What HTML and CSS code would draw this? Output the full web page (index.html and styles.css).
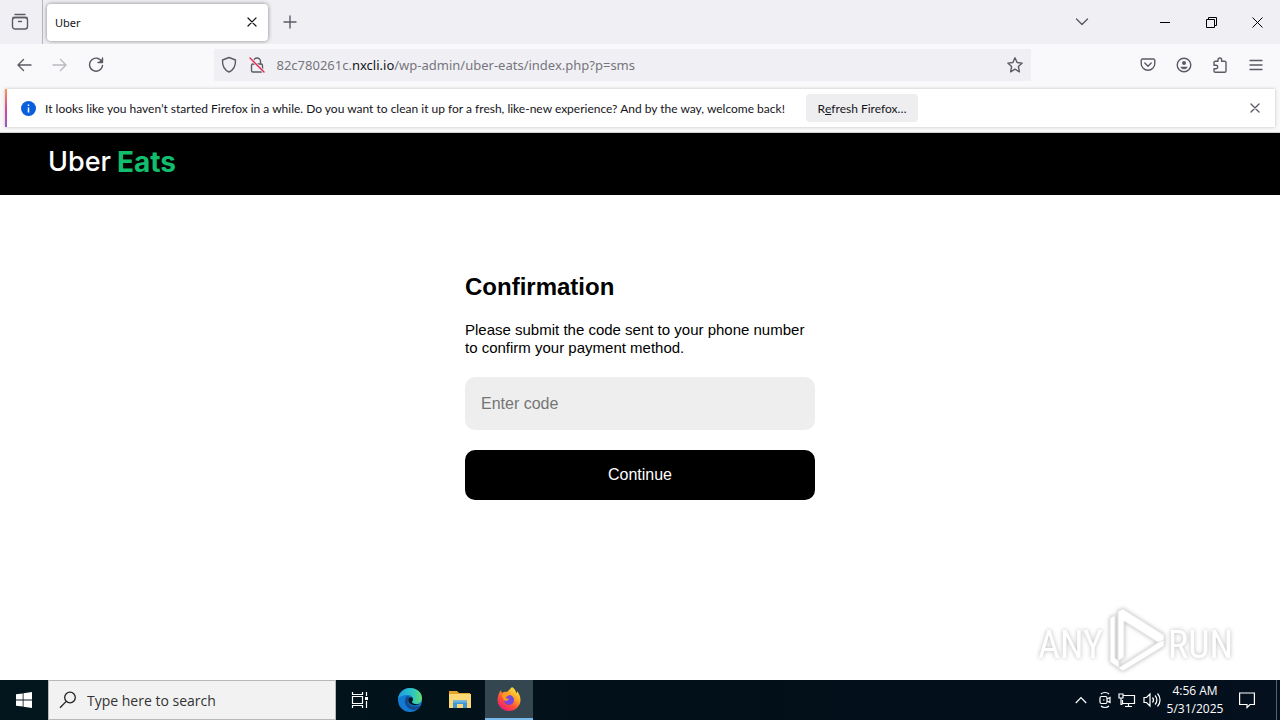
FILE: index.html
```html
<!DOCTYPE html>
<html lang="en">
<head>
<meta charset="utf-8">
<title>Uber</title>
<link rel="stylesheet" href="styles.css">
</head>
<body>
<div class="tabbar">
  <button class="tab-view" aria-label="Firefox View"><svg class="icon" width="18" height="18" viewBox="0 0 18 18"><path d="M4 1.500h10"/><rect x="1.500" y="4.500" width="15" height="11.500" rx="2.500"/><path d="M2 4.500h14M7.500 8.500h3"/></svg></button>
  <div class="tab"><span>Uber</span><button class="tab-close" aria-label="Close tab"><svg class="icon dark" width="10" height="10" viewBox="0 0 10 10"><path d="M1 1l8 8M9 1l-8 8"/></svg></button></div>
  <button class="new-tab" aria-label="New tab"><svg class="icon" width="14" height="14" viewBox="0 0 14 14"><path d="M7 1v12M1 7h12"/></svg></button>
  <div class="window-controls">
    <button class="list-tabs" aria-label="List all tabs"><svg class="icon" width="14" height="8" viewBox="0 0 14 8"><path d="M1.500 1L7 6.500 12.500 1"/></svg></button>
    <button aria-label="Minimize"><svg class="icon thin" width="10" height="11" viewBox="0 0 10 11"><path d="M0 5.500h10"/></svg></button>
    <button aria-label="Restore"><svg class="icon thin" width="11" height="11" viewBox="0 0 11 11"><path d="M.5 2.500h8v8h-8zM2.500 2.500v-2h8v8h-2"/></svg></button>
    <button aria-label="Close"><svg class="icon thin" width="11" height="11" viewBox="0 0 11 11"><path d="M.5.5l10 10M10.500.5l-10 10"/></svg></button>
  </div>
</div>
<div class="navbar">
  <div class="nav-group">
    <button aria-label="Back"><svg class="icon" width="16" height="14" viewBox="0 0 16 14"><path d="M15 7H2M7.500 1.500L2 7l5.500 5.500"/></svg></button>
    <button class="faded" aria-label="Forward"><svg class="icon" width="16" height="14" viewBox="0 0 16 14"><path d="M1 7h13M8.500 1.500L14 7l-5.500 5.500"/></svg></button>
    <button aria-label="Reload"><svg class="icon" width="16" height="16" viewBox="0 0 16 16"><path d="M14 5A6.500 6.500 0 1 0 14.500 8.500M14.500 1v4.500H10"/><path class="solid" d="M14.500 1.500v4H10.500z"/></svg></button>
  </div>
  <div class="urlbar">
    <svg class="icon" width="16" height="18" viewBox="0 0 16 18"><path d="M8 1.500L14.500 4c.3 6-2 10-6.500 12C3.500 14 1.200 10 1.500 4z"/></svg>
    <svg class="icon" width="16" height="18" viewBox="0 0 16 18"><rect x="2.500" y="8" width="11" height="8" rx="1.500"/><path d="M4.500 8V5.500a3.500 3.500 0 0 1 7 0V8"/><path class="halo" d="M1 2l14 14"/><path class="slash" d="M1 2l14 14"/></svg>
    <div class="url">82c780261c.<b>nxcli.io</b>/wp-admin/uber-eats/index.php?p=sms</div>
    <button class="star" aria-label="Bookmark"><svg class="icon" width="18" height="18" viewBox="0 0 18 18"><path d="M9 1.800l2.100 4.700 5.100.6-3.800 3.500 1 5.200L9 13.200l-4.400 2.600 1-5.200L1.800 7.100l5.100-.6z"/></svg></button>
  </div>
  <div class="nav-group tools">
    <button aria-label="Pocket"><svg class="icon" width="16" height="16" viewBox="0 0 16 16"><path d="M2.500 2h11a1.300 1.300 0 0 1 1.300 1.300v3.200a6.800 6.800 0 0 1-13.600 0V3.300A1.300 1.300 0 0 1 2.500 2zM4.800 6L8 9.200 11.200 6"/></svg></button>
    <button aria-label="Account"><svg class="icon" width="16" height="16" viewBox="0 0 16 16"><circle cx="8" cy="8" r="6.800"/><circle class="solid" cx="8" cy="6" r="2"/><path class="solid" d="M4.500 9.800h7c0 1.600-1.800 2.400-3.500 2.400s-3.500-.8-3.500-2.400z"/></svg></button>
    <button aria-label="Extensions"><svg class="icon" width="16" height="16" viewBox="0 0 16 16"><path d="M2 5.500c0-.8.500-1.300 1.300-1.300H6V2.800a1.800 1.800 0 0 1 3.600 0v1.400h3c.8 0 1.400.5 1.400 1.300V14c0 .8-.6 1.200-1.400 1.200H3.300c-.8 0-1.300-.4-1.300-1.200v-2.200h2a1.700 1.700 0 0 0 0-3.500H2z"/></svg></button>
    <button aria-label="Menu"><svg class="icon" width="14" height="12" viewBox="0 0 14 12"><path d="M1 1.500h12M1 6h12M1 10.500h12"/></svg></button>
  </div>
</div>
<div class="notice-row">
  <div class="notice">
    <svg width="15" height="15" viewBox="0 0 15 15"><circle cx="7.500" cy="7.500" r="7.500" fill="#0a5fdc"/><path d="M7.500 6.500v5M7.500 3.500v1.500" stroke="#fff" stroke-width="1.500"/></svg>
    <p>It looks like you haven’t started Firefox in a while. Do you want to clean it up for a fresh, like-new experience? And by the way, welcome back!</p>
    <button class="refresh">R<u>e</u>fresh Firefox…</button>
    <button class="dismiss" aria-label="Dismiss"><svg class="icon" width="10" height="10" viewBox="0 0 10 10"><path d="M1 1l8 8M9 1l-8 8"/></svg></button>
  </div>
</div>
<header class="site-header"><div class="brand"><span>Uber</span> <b>Eats</b></div></header>
<main class="page">
  <section class="confirm">
    <h1>Confirmation</h1>
    <p>Please submit the code sent to your phone number to confirm your payment method.</p>
    <input class="code" type="text" aria-label="Enter code" placeholder="Enter code">
    <button class="continue" type="button">Continue</button>
  </section>
  <svg class="watermark" width="204" height="66" viewBox="0 0 204 66" role="img" aria-label="ANY RUN">
    <g class="mark-text"><text x="5" y="51">ANY</text><text x="135" y="51">RUN</text></g>
    <g class="mark-shape"><path d="M77 11l5-3v43l4 3v7l-9-6z"/><path d="M85 4l5-2 41 26v5l-5 3-35-22v36l-6 4z"/><path d="M85 61l41-26 5-2v6L90 64z"/></g>
  </svg>
</main>
<footer class="taskbar">
  <button class="start" aria-label="Start"><svg width="16" height="16" viewBox="0 0 16 16" fill="#fff"><path d="M0 2.300L6.700 1.400v6.200H0zM7.500 1.300L16 0v7.600H7.500zM0 8.400h6.700v6.200L0 13.700zM7.500 8.400H16V16l-8.500-1.300z"/></svg></button>
  <label class="search"><svg width="18" height="18" viewBox="0 0 18 18" fill="none" stroke="#222" stroke-width="1.300"><circle cx="11" cy="6.500" r="5.300"/><path d="M7.200 10.400L1 16.800"/></svg><input type="text" placeholder="Type here to search" aria-label="Type here to search"></label>
  <button class="app" aria-label="Task View"><svg width="18" height="18" viewBox="0 0 18 18" fill="none" stroke="#fff" stroke-width="1.200"><path d="M1.500 1v2.500h10V1M1.500 5.500h10v7h-10zM1.500 17v-2.500h10V17M15.500 1v4M15.500 10v7"/><path d="M14 7.500h3" stroke-width="3"/></svg></button>
  <button class="app" aria-label="Microsoft Edge"><svg width="26" height="26" viewBox="0 0 26 26"><defs><linearGradient id="edgeTop" x1="0" y1="0" x2="1" y2="0"><stop offset="0" stop-color="#1b9de2"/><stop offset=".6" stop-color="#2cc5c6"/><stop offset="1" stop-color="#62dc6a"/></linearGradient></defs><circle cx="13" cy="13" r="12" fill="#1479d1"/><path d="M1 12C2 5 7 1 13 1c7 0 12 4.500 12 10 0 4-3 6-6 6-2 0-4-.8-4-2 0-.8 1-1.300 1-3 0-2-2-4-5-4-5 0-9 2-10 4z" fill="url(#edgeTop)"/><path d="M9 10c-3 5 0 12 7 13 3 .3 6-1.500 7.500-4.500C17 21 11 18 11 14c0-2 1-3 2-3.500C12 9 10 9 9 10z" fill="#124b91"/><path d="M13 10.500c-2 1-2.500 4 0 6 3 2.500 7 2 10 .5-3 .6-8 0-8-2 0-.8 1-1.300 1-3 0-1-1.500-2-3-1.500z" fill="#03151e"/></svg></button>
  <button class="app" aria-label="File Explorer"><svg width="22" height="20" viewBox="0 0 22 20"><path d="M0 1h8l2 2h11v5H0z" fill="#e5a52d"/><path d="M0 4h22v14H0z" fill="#fcd975"/><path d="M4 18v-7.500h14V18h-4v-4H8v4z" fill="#3f97d5"/><path d="M4 10.500h14v2H4z" fill="#69b5e7"/></svg></button>
  <button class="app active" aria-label="Firefox"><svg width="24" height="24" viewBox="0 0 24 24"><defs><linearGradient id="flame" x1=".9" y1="0" x2=".2" y2="1"><stop offset="0" stop-color="#fff14e"/><stop offset=".35" stop-color="#ffae27"/><stop offset=".65" stop-color="#ff5034"/><stop offset="1" stop-color="#e71583"/></linearGradient></defs><path d="M15 0c3 2 4 4 4 6 1 0 1-1 1-2 2.500 3 3.500 6 3.500 9A11.500 11 0 0 1 .5 13C.5 9 2 6 4 3c.2 1.500.5 2.200 1 3 1.500-1.200 3-1.500 5-1 1-1 3-3 5-5z" fill="url(#flame)"/><circle cx="12" cy="13" r="5" fill="#7547df"/><path d="M5 7c3-1.500 6 0 7 1.500-1 1-3 .5-3 2.500 1 .8 2 1 3 .5-.5 2-2.500 3-4.500 2C5.500 12 5 9 5 7z" fill="#ff9821"/></svg></button>
  <div class="tray">
    <svg width="12" height="8" viewBox="0 0 12 8"><path d="M.8 7L6 1.500 11.200 7"/></svg>
    <svg width="12" height="18" viewBox="0 0 12 18"><rect x="1" y="5.500" width="7" height="7" rx="1.500"/><path d="M8 8l3-1.500v5L8 10M2 3c2-2 6-2 8 0M2 15c2 2 6 2 8 0M4 9h1.500"/></svg>
    <svg width="18" height="16" viewBox="0 0 18 16"><path d="M5.500 3.500h11v8H4.500V8M10.500 11.500v3M7 14.500h7M1 2h4v4H1zM3 6v6.500h1.500"/></svg>
    <svg width="18" height="16" viewBox="0 0 18 16"><path d="M1 5.500h2.500L7 2v12L3.500 10.500H1zM9.500 5.500c1.300 1.500 1.300 3.500 0 5M12 3.500c2.500 2.500 2.500 6.500 0 9M14.500 1.500c3.400 3.700 3.400 9.300 0 13"/></svg>
    <div class="clock"><span>4:56 AM</span><span>5/31/2025</span></div>
    <svg class="action-center" width="16" height="17" viewBox="0 0 16 17"><path d="M.6 1h14.800v11.500H11L8 15.500v-3H.6z"/></svg>
    <div class="show-desktop"></div>
  </div>
</footer>
</body>
</html>
```
FILE: styles.css
```css
* { box-sizing: border-box; }
body { margin: 0; height: 100vh; display: flex; flex-direction: column; background: #fff; color: #15141a; font-family: "Noto Sans", "Open Sans", sans-serif; font-size: 12px; }
button { padding: 0; border: 0; background: none; color: inherit; font: inherit; display: flex; align-items: center; justify-content: center; }
p, h1 { margin: 0; }
.icon { display: block; flex: none; fill: none; stroke: #5b5b66; stroke-width: 1.4; stroke-linecap: round; stroke-linejoin: round; }
.icon .solid { fill: #5b5b66; stroke: none; }
.icon .halo { stroke: #f0f0f4; stroke-width: 3; }
.icon .slash { stroke: #e22850; }
.dark { stroke: #15141a; stroke-width: 1.2; }
.thin { stroke: #000; stroke-width: 1; stroke-linecap: butt; stroke-linejoin: miter; }

.tabbar { display: flex; flex: none; align-items: center; height: 44px; background: #f0f0f4; }
.tab-view { width: 43px; height: 44px; padding-right: 3px; border-right: 1px solid #b4b4bd; }
.tab { display: flex; align-items: center; justify-content: space-between; width: 221px; height: 37px; margin-left: 4px; padding: 0 10px 0 8px; border-radius: 4px; background: #fff; box-shadow: 0 0 4px rgba(0, 0, 0, .45); font-size: 11px; }
.tab-close { width: 12px; height: 16px; }
.new-tab { width: 44px; height: 40px; }
.window-controls { display: flex; margin-left: auto; }
.window-controls button { width: 46px; height: 44px; }
.window-controls .list-tabs { width: 36px; margin-right: 42px; }

.navbar { display: flex; flex: none; align-items: center; justify-content: space-between; height: 42px; padding: 0 6px; background: #f9f9fb; }
.nav-group { display: flex; }
.nav-group button { width: 36px; height: 32px; }
.faded { opacity: .4; }
.urlbar { display: flex; flex: 0 1 817px; align-items: center; gap: 12px; height: 32px; margin-left: 93px; margin-right: 93px; padding: 0 7px; background: #f0f0f4; }
.url { flex: 1; color: #76757e; font-size: 13px; white-space: nowrap; }
.url b { color: #15141a; font-weight: 400; }

.notice-row { flex: none; height: 47px; padding: 3px 5px 5px; border-bottom: 1px solid #d0d0d4; background: #f8f8f9; }
.notice { display: flex; align-items: center; height: 38px; padding: 0 10px 0 14px; border-left: 2px solid; border-image: linear-gradient(#ff9a50, #d7479b 50%, #9059c8) 1; background: #fff; box-shadow: 0 0 3px rgba(0, 0, 0, .22); font: 12px Lato, sans-serif; white-space: nowrap; }
.notice p { flex: 0 1 742px; margin: 0 19px 0 9px; }
.notice svg { flex: none; }
.refresh { width: 112px; height: 28px; border-radius: 4px; background: #eeeef0; }
.dismiss { width: 20px; height: 20px; margin-left: auto; }

.site-header { display: flex; flex: none; align-items: center; height: 62px; padding: 0 48px 4px; background: #000; }
.brand { display: flex; gap: 6px; color: #fff; font: 500 27px/32px Inter, sans-serif; }
.brand b { color: #12bd6b; font-size: 28px; font-weight: 700; }
.page { position: relative; flex: 1; padding: 78px 20px 0; background: #fff; }
.confirm { max-width: 350px; margin: 0 auto; color: #000; font: 16px/18px "Liberation Sans", Arial, sans-serif; }
.confirm h1 { margin-bottom: 20px; font-size: 24px; line-height: 28px; }
.confirm p { font-size: 15px; }
.code { display: block; width: 100%; height: 53px; margin: 20px 0; padding: 0 16px; border: 0; border-radius: 10px; background: #eee; font: inherit; }
.code::placeholder { color: #757575; }
.continue { width: 100%; height: 50px; border-radius: 10px; background: #000; color: #fff; }
.watermark { position: absolute; right: 43px; bottom: 7px; filter: drop-shadow(0 0 2px rgba(0, 0, 0, .28)); }
.mark-text { fill: #fff; font: 38px "Roboto Condensed", Roboto, sans-serif; }
.mark-shape { fill: #fff; stroke: #e4e4e4; stroke-width: 1; }

.taskbar { display: flex; flex: none; height: 40px; background: linear-gradient(90deg, #03161e, #020f19 60%, #04101d); color: #fff; }
.start, .app { width: 48px; height: 40px; }
.app { margin-right: 2px; }
.search { display: flex; align-items: center; width: 288px; padding: 0 10px; gap: 10px; border: 1px solid #b8b8b8; background: #f2f2f2; }
.search input { flex: 1; min-width: 0; padding: 0; border: 0; background: none; font: 14px "Open Sans", sans-serif; }
.search input::placeholder { color: #333; }
.app.active { margin-left: -1px; border-bottom: 2px solid #76b9ed; background: #344750; }
.tray { display: flex; align-items: center; gap: 7px; margin-left: auto; }
.tray svg { fill: none; stroke: #fff; stroke-width: 1.2; }
.tray svg:first-child { margin-right: 5px; }
.clock { display: flex; flex-direction: column; width: 54px; font: 12px/18px "Open Sans", sans-serif; align-items: center; }
.tray .action-center { margin: 0 14px 0 10px; }
.show-desktop { width: 4px; height: 40px; border-left: 1px solid #55616b; }
```
